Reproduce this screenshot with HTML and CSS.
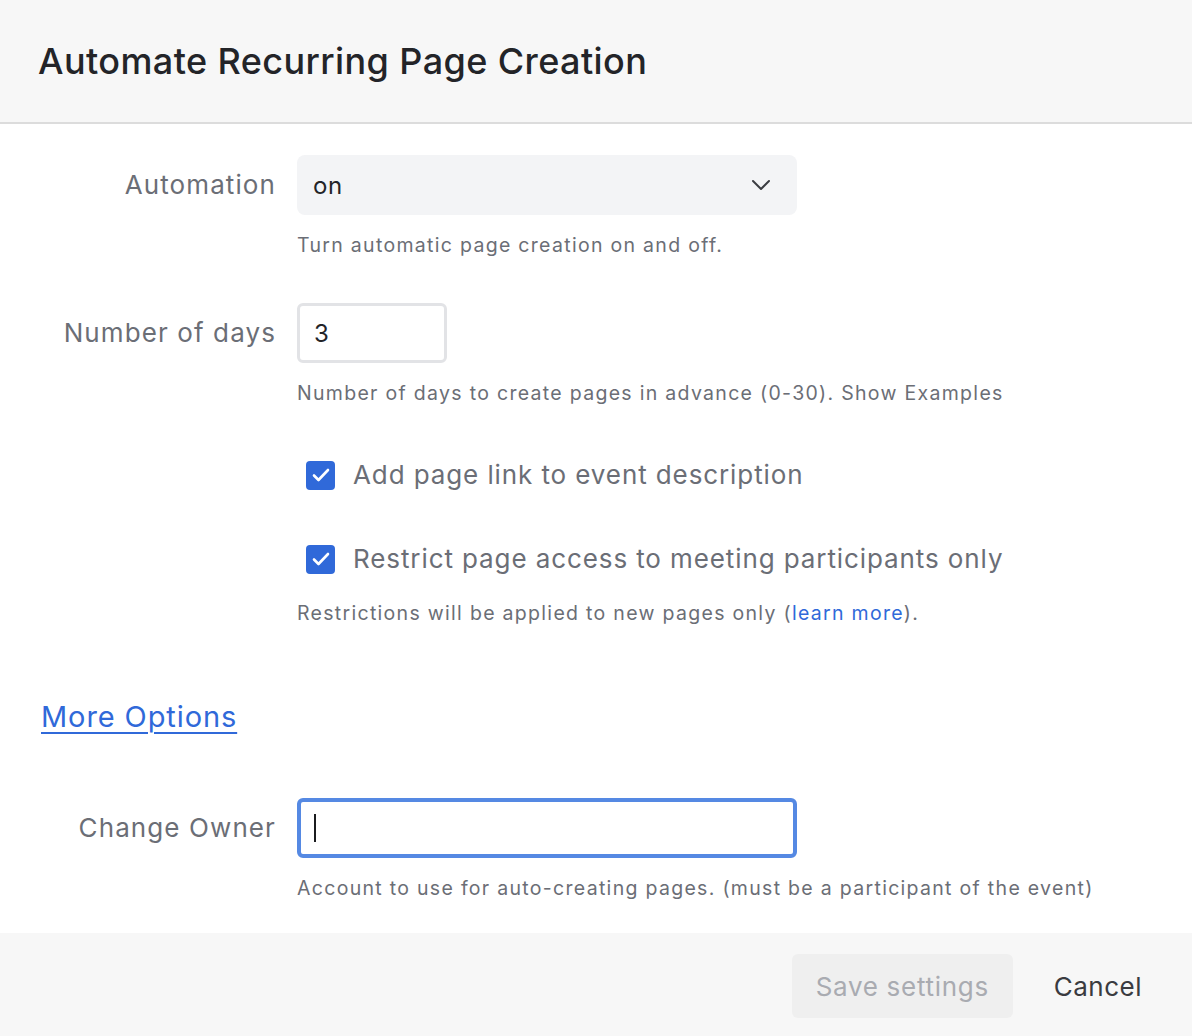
FILE: index.html
```html
<!DOCTYPE html>
<html lang="en">
<head>
<meta charset="utf-8">
<title>Automate Recurring Page Creation</title>
<link rel="stylesheet" href="styles.css">
</head>
<body>
<div class="dialog">
  <header class="head">
    <h1 class="title">Automate Recurring Page Creation</h1>
  </header>
  <main class="body">
    <div class="row row-automation">
      <div class="lbl">Automation</div>
      <div class="ctrl">
        <div class="select">
          <span>on</span>
          <svg class="chev" width="20" height="12" viewBox="0 0 20 12"><path d="M2 2 L10 10 L18 2" fill="none" stroke="#3b3d42" stroke-width="2" stroke-linecap="round" stroke-linejoin="round"/></svg>
        </div>
        <p class="help">Turn automatic page creation on and off.</p>
      </div>
    </div>
    <div class="row row-days">
      <div class="lbl">Number of days</div>
      <div class="ctrl">
        <div class="num">3</div>
        <p class="help">Number of days to create pages in advance (0-30). Show Examples</p>
      </div>
    </div>
    <div class="checks">
      <div class="check check-first">
        <span class="box"><svg width="18" height="14" viewBox="0 0 18 14"><path d="M2 7.5 L6.5 12 L16 2" fill="none" stroke="#fff" stroke-width="2.6" stroke-linecap="round" stroke-linejoin="round"/></svg></span>
        <span class="check-text">Add page link to event description</span>
      </div>
      <div class="check check-second">
        <span class="box"><svg width="18" height="14" viewBox="0 0 18 14"><path d="M2 7.5 L6.5 12 L16 2" fill="none" stroke="#fff" stroke-width="2.6" stroke-linecap="round" stroke-linejoin="round"/></svg></span>
        <span class="check-text">Restrict page access to meeting participants only</span>
      </div>
      <p class="help help-restrict">Restrictions will be applied to new pages only (<a class="inline-link" href="#">learn more</a>).</p>
    </div>
    <a class="more" href="#">More Options</a>
    <div class="row row-owner">
      <div class="lbl">Change Owner</div>
      <div class="ctrl">
        <div class="owner"><span class="caret"></span></div>
        <p class="help">Account to use for auto-creating pages. (must be a participant of the event)</p>
      </div>
    </div>
  </main>
  <footer class="foot">
    <button class="save" type="button">Save settings</button>
    <button class="cancel" type="button">Cancel</button>
  </footer>
</div>
</body>
</html>
```
FILE: styles.css
```css
* { box-sizing: border-box; }
html, body { margin: 0; padding: 0; }
body {
  width: 1192px;
  height: 1036px;
  overflow: hidden;
  background: #ffffff;
  font-family: Inter, "Noto Sans", "Liberation Sans", sans-serif;
  color: #6b6e76;
}
.dialog {
  display: flex;
  flex-direction: column;
  height: 1036px;
}
.head {
  background: #f7f7f7;
  height: 124px;
  border-bottom: 2px solid #dcdcdc;
  display: flex;
  align-items: center;
  padding: 0 0 0 38px;
}
.title {
  margin: 0;
  font-size: 36px;
  font-weight: 500;
  color: #232428;
  letter-spacing: 0.4px;
  padding-bottom: 1px;
}
.body {
  flex: 1;
  padding: 31px 0 0 0;
}
.row {
  display: grid;
  grid-template-columns: 276px 1fr;
  column-gap: 21px;
}
.lbl {
  text-align: right;
  font-size: 26px;
  line-height: 60px;
  height: 60px;
  color: #6b6e76;
  letter-spacing: 1.1px;
  white-space: nowrap;
}
.ctrl { display: flex; flex-direction: column; }
.select {
  width: 500px;
  height: 60px;
  background: #f3f4f6;
  border-radius: 8px;
  display: flex;
  align-items: center;
  justify-content: space-between;
  padding: 0 26px 0 16px;
  font-size: 24px;
  letter-spacing: 0.6px;
  color: #232428;
}
.chev { display: block; }
.help {
  margin: 18px 0 0 0;
  font-size: 19.5px;
  line-height: 24px;
  letter-spacing: 1.3px;
  color: #6b6e76;
  white-space: nowrap;
}
.row-days { margin-top: 46px; }
.num {
  width: 150px;
  height: 60px;
  border: 3px solid #e2e3e6;
  border-radius: 6px;
  font-size: 24px;
  color: #232428;
  display: flex;
  align-items: center;
  padding-left: 14px;
}
.checks {
  padding-left: 297px;
  margin-top: 53px;
}
.check {
  display: flex;
  align-items: center;
  height: 34px;
  padding-left: 9px;
}
.check-second { margin-top: 50px; }
.box {
  width: 29px;
  height: 29px;
  border-radius: 4px;
  background: #3069d9;
  display: flex;
  align-items: center;
  justify-content: center;
  margin-right: 18px;
  flex: none;
}
.box svg { display: block; }
.check-text {
  font-size: 26px;
  line-height: 34px;
  letter-spacing: 0.9px;
  color: #6b6e76;
  white-space: nowrap;
}
.help-restrict { margin-top: 25px; }
.inline-link { color: #3069d9; text-decoration: none; }
.more {
  display: inline-block;
  margin: 74px 0 0 41px;
  font-size: 29px;
  line-height: 36px;
  letter-spacing: 0.9px;
  color: #3069d9;
  text-decoration: underline;
  text-underline-offset: 5px;
  text-decoration-thickness: 2px;
}
.row-owner { margin-top: 63px; }
.owner {
  width: 500px;
  height: 60px;
  border: 4px solid #5589e3;
  border-radius: 6px;
  display: flex;
  align-items: center;
  padding-left: 13px;
}
.caret {
  width: 2px;
  height: 28px;
  background: #1b1c1f;
}
.foot {
  background: #f7f7f7;
  height: 103px;
  display: flex;
  align-items: flex-start;
  justify-content: flex-end;
  padding: 21px 50px 0 0;
  gap: 41px;
}
.save {
  width: 221px;
  height: 64px;
  border: none;
  border-radius: 6px;
  background: #efefef;
  color: #a9abb1;
  font-family: inherit;
  font-size: 26px;
  letter-spacing: 0.7px;
}
.cancel {
  height: 64px;
  border: none;
  background: transparent;
  color: #3a3b40;
  font-family: inherit;
  font-size: 26px;
  letter-spacing: 0.5px;
  padding: 0;
}
```
